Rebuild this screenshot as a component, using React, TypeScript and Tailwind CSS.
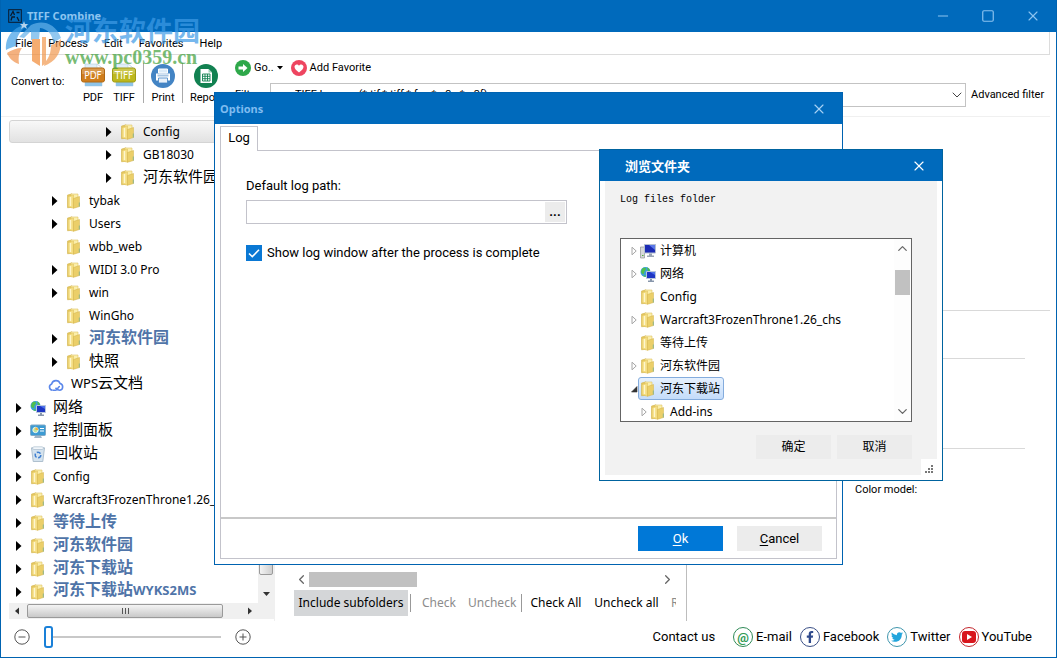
import type { ReactNode } from 'react';
import { useState } from 'react';
import { FaFacebookF, FaTwitter } from 'react-icons/fa';
import { ChevronDown, ChevronLeft, ChevronRight, ChevronUp, Minus, Square, X } from 'lucide-react';

type IconName = 'folder' | 'cloud' | 'network' | 'panel' | 'bin' | 'computer';

interface TreeItem {
    label: string;
    level: number;
    icon: IconName;
    leaf?: boolean;
    marked?: boolean;
    selected?: boolean;
    open?: boolean;
}

const TREE: TreeItem[] = [
    { label: 'Config', level: 5, icon: 'folder', selected: true },
    { label: 'GB18030', level: 5, icon: 'folder' },
    { label: '河东软件园', level: 5, icon: 'folder' },
    { label: 'tybak', level: 2, icon: 'folder' },
    { label: 'Users', level: 2, icon: 'folder' },
    { label: 'wbb_web', level: 2, icon: 'folder', leaf: true },
    { label: 'WIDI 3.0 Pro', level: 2, icon: 'folder' },
    { label: 'win', level: 2, icon: 'folder' },
    { label: 'WinGho', level: 2, icon: 'folder', leaf: true },
    { label: '河东软件园', level: 2, icon: 'folder', marked: true },
    { label: '快照', level: 2, icon: 'folder' },
    { label: 'WPS云文档', level: 1, icon: 'cloud', leaf: true },
    { label: '网络', level: 0, icon: 'network' },
    { label: '控制面板', level: 0, icon: 'panel' },
    { label: '回收站', level: 0, icon: 'bin' },
    { label: 'Config', level: 0, icon: 'folder' },
    { label: 'Warcraft3FrozenThrone1.26_chs', level: 0, icon: 'folder' },
    { label: '等待上传', level: 0, icon: 'folder', marked: true },
    { label: '河东软件园', level: 0, icon: 'folder', marked: true },
    { label: '河东下载站', level: 0, icon: 'folder', marked: true },
    { label: '河东下载站WYKS2MS', level: 0, icon: 'folder', marked: true },
];

const BROWSE_TREE: TreeItem[] = [
    { label: '计算机', level: 0, icon: 'computer' },
    { label: '网络', level: 0, icon: 'network' },
    { label: 'Config', level: 0, icon: 'folder', leaf: true },
    { label: 'Warcraft3FrozenThrone1.26_chs', level: 0, icon: 'folder' },
    { label: '等待上传', level: 0, icon: 'folder', leaf: true },
    { label: '河东软件园', level: 0, icon: 'folder' },
    { label: '河东下载站', level: 0, icon: 'folder', selected: true, open: true },
    { label: 'Add-ins', level: 1, icon: 'folder' },
];

const INDENT: Record<number, string> = {
    0: 'pl-1',
    1: 'pl-[22px]',
    2: 'pl-10',
    5: 'pl-[94px]',
};

const TREE_ICONS: Record<IconName, ReactNode> = {
    folder: (
        <svg viewBox="0 0 16 16" className="size-4">
            <path d="M1.500 2 6 .8v13.500l-4.500.5z" fill="#e6c95f" stroke="#cfae45" strokeWidth=".5" />
            <path d="M5 1h7v12L8 14.500H5z" fill="#fbeeaa" stroke="#dfc564" strokeWidth=".6" />
            <path d="M2 3.500 7.500 2v13.300L2 13.800z" fill="#f4dd82" stroke="#dcbd57" strokeWidth=".5" />
            <path d="M7.500 5.500 13.500 3.500v10L7.500 15.300z" fill="#ebcf69" stroke="#d3b24a" strokeWidth=".5" />
            <path d="M4.500 4v9" stroke="#fdf6cf" strokeWidth="1.400" />
            <path d="M13.300 9.500v4" stroke="#8cb48a" strokeWidth="1" />
        </svg>
    ),
    cloud: (
        <svg viewBox="0 0 16 16" className="size-4" fill="none" stroke="#5b87ea" strokeWidth="1.600">
            <path d="M4.500 13.300a3.300 3.300 0 0 1-.8-6.400 4.400 4.400 0 0 1 8.400-.4 3.500 3.500 0 0 1-.2 6.800c-2.500 0-3.400-1.300-4.400-2.500" />
            <path d="M4.500 13.300h3c2.500 0 2-3.800 4.500-3.800" />
        </svg>
    ),
    network: (
        <svg viewBox="0 0 16 16" className="size-4">
            <circle cx="5.500" cy="6" r="5" fill="#3b9fd8" />
            <path d="M2 3c2-2 4-1 4 0S4 5 4 7 2 8 1 6zM7 1.500c2 .5 3 2 3 3.500L8 5z" fill="#4fbf4c" />
            <path d="M3 10c1-1 2-1 3 0l-1 1z" fill="#4fbf4c" />
            <path d="M6.500 5.500h9v7h-9z" fill="#1d36c4" stroke="#b8c6dc" strokeWidth="1" />
            <path d="M10 6h5v3z" fill="#4e71ea" />
            <path d="M10 13h2v1.500h2V16H8v-1.500h2z" fill="#8796ab" />
        </svg>
    ),
    panel: (
        <svg viewBox="0 0 16 16" className="size-4">
            <rect x=".5" y="2" width="15" height="10.500" rx="1" fill="#3c9bd3" stroke="#7fa9c6" />
            <circle cx="5.500" cy="7" r="2.700" fill="#bfe3a0" stroke="#fff" strokeWidth=".8" />
            <path d="M5.500 7V4.300A2.700 2.700 0 0 1 8.200 7z" fill="#f0b040" />
            <path d="M10 5.500h4M10 8h4" stroke="#fff" />
            <path d="M5 13h6l1 2H4z" fill="#9fb4c6" />
        </svg>
    ),
    bin: (
        <svg viewBox="0 0 16 16" className="size-4">
            <path d="M1.500 2h13l-1.700 13.500H3.200z" fill="#d5e3ee" stroke="#9fb4c4" strokeWidth=".8" />
            <path d="M1.500 2 4 .8h8L14.500 2 12 3.500H4z" fill="#f1f6fa" stroke="#9fb4c4" strokeWidth=".6" />
            <circle cx="8" cy="9" r="2.800" fill="none" stroke="#3f7fd1" strokeWidth="1.500" strokeDasharray="4.200 1.600" />
        </svg>
    ),
    computer: (
        <svg viewBox="0 0 16 16" className="size-4">
            <path d="M.5 4h4v11h-4z" fill="#d7d9da" stroke="#8f9494" strokeWidth=".7" />
            <path d="M2 12.500h1.500" stroke="#4fae3b" />
            <path d="M4.500 1.500h11v8.500h-11z" fill="#1b2bb4" stroke="#b4bfd0" />
            <path d="M9 2h6v5z" fill="#5a78e8" />
            <path d="M9 10.500h3v2h2V14H7v-1.500h2z" fill="#9aa5b4" />
        </svg>
    ),
};

function Arrow({ item, hollow }: { item: TreeItem; hollow?: boolean }) {
    return (
        <svg viewBox="0 0 8 10" className="h-[10px] w-2 shrink-0">
            {item.open && <path d="M7 2.500V8H1.500z" fill="#333" stroke="#333" strokeWidth=".6" />}
            {!item.leaf && !item.open && hollow && (
                <path d="M2 1.200 6.200 5 2 8.800z" fill="#fff" stroke="#a6a6a6" />
            )}
            {!item.leaf && !item.open && !hollow && <path d="M2 0 7.500 5 2 10z" fill="#000" />}
        </svg>
    );
}

function TreeRow({ item }: { item: TreeItem }) {
    const hasCjk = /[\u4e00-\u9fff]/.test(item.label);
    return (
        <li
            className={`flex h-[23px] items-center border whitespace-nowrap ${INDENT[item.level]} ${
                item.selected
                    ? 'rounded-[3px] border-[#d4d4d4] bg-linear-to-b from-[#f8f8f8] to-[#e2e2e2]'
                    : 'border-transparent'
            }`}
        >
            <Arrow item={item} />
            <span className="ml-2 shrink-0">{TREE_ICONS[item.icon]}</span>
            <span
                className={`ml-[7px] ${item.marked ? 'font-bold text-[#4f74a8]' : ''} ${
                    hasCjk ? (item.marked ? 'pb-1 text-[16px]' : 'pb-1 text-[15px]') : ''
                }`}
            >
                {item.label.split(/([A-Z0-9]+)/).map((part, i) => (
                    <span key={i} className={/^[A-Z0-9]/.test(part) && hasCjk ? 'text-[13px]' : ''}>
                        {part}
                    </span>
                ))}
            </span>
        </li>
    );
}

function BrowseRow({ item }: { item: TreeItem }) {
    return (
        <li className={`flex h-[23px] items-center whitespace-nowrap ${item.level ? 'pl-[19px]' : 'pl-[9px]'}`}>
            <Arrow item={item} hollow />
            <span
                className={`flex h-[23px] items-center gap-1 rounded-[3px] border pr-[3px] pl-px ${
                    item.selected
                        ? 'border-[#84acdd] bg-linear-to-b from-[#e6f1fe] to-[#c4dcfa]'
                        : 'border-transparent'
                }`}
            >
                {TREE_ICONS[item.icon]}
                {item.label}
            </span>
        </li>
    );
}

function FileTypeIcon({ text, tone }: { text: string; tone: 'orange' | 'lime' }) {
    return (
        <span className="relative flex h-[26px] w-6 items-center">
            <svg viewBox="0 0 24 26" className="absolute inset-0">
                <path d="M4 1h12l5 4v18H4z" fill="#dfeefa" stroke="#b9cddd" strokeWidth=".6" />
                <path d="M16 1v4h5z" fill="#fff" stroke="#b9cddd" strokeWidth=".6" />
                <path d="M4 18h17v5H4z" fill="#8fc4e8" />
                <rect
                    x=".5"
                    y="5"
                    width="23"
                    height="14"
                    rx="2"
                    fill={tone === 'orange' ? '#cf7d1c' : '#bdb81d'}
                    stroke={tone === 'orange' ? '#b06812' : '#a19c14'}
                />
                <path d="M1 7a1.500 1.500 0 0 1 1.500-1.500h19A1.500 1.500 0 0 1 23 7v4H1z" fill="#fff" opacity=".22" />
            </svg>
            <span className="relative w-full text-center font-['DejaVu_Sans_Condensed'] text-[10px] leading-none text-white">
                {text}
            </span>
        </span>
    );
}

function ToolButton({ icon, label }: { icon: ReactNode; label: string }) {
    return (
        <button type="button" className="flex flex-col items-center gap-px">
            <span className="flex h-[26px] items-center">{icon}</span>
            {label}
        </button>
    );
}

function PrintIcon() {
    return (
        <svg viewBox="0 0 24 24" className="size-6">
            <circle cx="12" cy="12" r="12" fill="#4384c4" />
            <path d="M7.500 5h9v4h-9z" fill="#dcebf8" stroke="#fff" />
            <path d="M5 9.500h14v7H5z" fill="#fff" />
            <path d="M6.500 10.500h11v2h-11z" fill="#a7c5e2" />
            <path d="M7.500 14h9v5h-9z" fill="#e8f1fa" stroke="#4384c4" strokeWidth=".8" />
        </svg>
    );
}

function ReportIcon() {
    return (
        <svg viewBox="0 0 24 24" className="size-6">
            <circle cx="12" cy="12" r="12" fill="#128151" />
            <path d="M6.500 5h8l3.500 3.500V19H6.500z" fill="#fff" />
            <path d="M14.500 5v3.500H18z" fill="#9fd0b8" />
            <path
                d="M8.500 10h7.500v7H8.500zM8.500 12.300h7.500M8.500 14.700h7.500M11 10v7M13.500 10v7"
                fill="none"
                stroke="#128151"
                strokeWidth=".9"
            />
        </svg>
    );
}

function CaptionButtons() {
    return (
        <div className="flex items-center gap-[30px] pr-[15px] text-[#8cc4f0]">
            <button type="button" aria-label="Minimize">
                <Minus className="size-4" strokeWidth={1.500} />
            </button>
            <button type="button" aria-label="Maximize">
                <Square className="size-[14px]" strokeWidth={2} />
            </button>
            <button type="button" aria-label="Close">
                <X className="size-4" strokeWidth={1.700} />
            </button>
        </div>
    );
}

function Watermark() {
    return (
        <div className="pointer-events-none absolute top-[14px] left-[4px] flex opacity-70">
            <svg viewBox="0 0 60 54" className="h-[54px] w-[60px]">
                <path d="M1 36C0 22 9 12 24 10c-9 6-13 13-13 22-3 1-7 2-10 4z" fill="#3f9fe6" />
                <path d="M26 11C36 6 50 8 56 24l-8 5c0-8-5-14-13-15l-1 12h-8V17l-7 7-5-1z" fill="#64b2ea" />
                <path d="M2 39c4-3 10-5 15-5-3 4-4 9-3 16C8 48 4 44 2 39z" fill="#f0914a" />
                <path d="M27 25h8v27l-8-5z" fill="#f28a35" />
                <path d="M37 23h4v26l-4 3zM46 31c4-1 7-3 10-6 1 14-6 23-17 27l1-4c4-4 6-10 6-17z" fill="#f29a50" />
                <path d="m19 7 1 3h3l-2 2 1 3-3-2-3 2 1-3-2-2h3z" fill="#fff" />
            </svg>
            <div className="flex flex-col">
                <span className="font-['Noto_Sans_CJK_SC',sans-serif] text-[27px] leading-[32px] font-bold text-[#3e9be6]">
                    河东软件园
                </span>
                <span className="font-['Liberation_Serif',serif] text-[20px] leading-[22px] font-bold text-[#3fa03a]">
                    www.pc0359.cn
                </span>
            </div>
        </div>
    );
}

function SidePanel() {
    return (
        <aside className="flex w-[274px] shrink-0 flex-col border-r border-[#f0f0f0] pl-2">
            <div className="flex pt-[3px]">
                <ul className="min-w-0 flex-1 overflow-hidden">
                    {TREE.map((item, i) => (
                        <TreeRow key={i} item={item} />
                    ))}
                </ul>
                <div className="flex w-4 shrink-0 flex-col items-center justify-end bg-[#f0f0f0]">
                    <div className="h-[120px] w-[14px] rounded-[2px] border border-[#9a9a9a] bg-linear-to-r from-[#f4f4f4] to-[#cfcfcf]" />
                    <svg viewBox="0 0 15 28" className="h-7 w-[15px]">
                        <path d="M4 17h7l-3.500 4z" fill="#333" />
                    </svg>
                </div>
            </div>
            <div className="flex h-4 items-center bg-[#f0f0f0]">
                <svg viewBox="0 0 18 16" className="h-4 w-[18px]">
                    <path d="M10 4.500v7L6 8z" fill="#333" />
                </svg>
                <div className="flex h-[14px] w-[196px] items-center justify-center gap-[2px] rounded-[2px] border border-[#9a9a9a] bg-linear-to-b from-[#f4f4f4] to-[#c9c9c9]">
                    <i className="h-[6px] w-px bg-[#555]" />
                    <i className="h-[6px] w-px bg-[#555]" />
                    <i className="h-[6px] w-px bg-[#555]" />
                </div>
                <svg viewBox="0 0 18 16" className="ml-[18px] h-4 w-[18px]">
                    <path d="M7 4.500v7L11 8z" fill="#333" />
                </svg>
            </div>
        </aside>
    );
}

function ListPanel() {
    return (
        <section className="flex w-[408px] shrink-0 flex-col justify-end border-r border-[#bdbdbd] pr-[10px] pl-[15px]">
            <div className="flex h-[15px] items-center text-[#666]">
                <ChevronLeft className="size-[15px]" strokeWidth={2} />
                <div className="h-full w-[108px] bg-[#c1c1c1]" />
                <ChevronRight className="mr-px ml-auto size-[15px]" strokeWidth={2} />
            </div>
            <div className="mt-[3px] mb-[5px] flex h-[26px] items-center overflow-hidden text-[12px] whitespace-nowrap">
                <button type="button" className="h-full w-[114px] shrink-0 bg-[#d4d6d8]">
                    Include subfolders
                </button>
                <div className="ml-[2px] h-[18px] w-px shrink-0 bg-[#999]" />
                <button type="button" className="ml-[11px] w-[34px] shrink-0 text-[#8c8c8c]">Check</button>
                <button type="button" className="ml-3 w-[48px] shrink-0 text-[#8c8c8c]">Uncheck</button>
                <div className="ml-[5px] h-[18px] w-px shrink-0 bg-[#999]" />
                <button type="button" className="ml-2 w-[52px] shrink-0">Check All</button>
                <button type="button" className="ml-3 w-[65px] shrink-0">Uncheck all</button>
                <button type="button" className="ml-3 text-[#8c8c8c]">Refresh</button>
            </div>
        </section>
    );
}

function SettingsPanel() {
    return (
        <section className="flex flex-1 flex-col pt-[193px] pr-[6px]">
            <hr className="border-[#d9d9d9]" />
            <hr className="mt-[47px] mr-[25px] border-[#d9d9d9]" />
            <hr className="mt-[89px] mr-[25px] border-[#d9d9d9]" />
            <p className="mt-[33px] ml-[168px] font-[Roboto] text-[11px] leading-4">Color model:</p>
        </section>
    );
}

function ContactLink({ label, ring, children }: { label: string; ring: string; children: ReactNode }) {
    return (
        <a href="#contact" className="flex items-center gap-[3px]">
            <span className={`flex size-5 items-center justify-center rounded-full border ${ring}`}>{children}</span>
            {label}
        </a>
    );
}

function Footer() {
    const [zoom, setZoom] = useState(0);

    return (
        <footer className="flex h-9 items-center justify-between pr-6 pb-1 pl-[13px] font-[Roboto] text-[13px]">
            <div className="flex items-center">
                <svg viewBox="0 0 16 16" className="size-4" fill="none" stroke="#555">
                    <circle cx="8" cy="8" r="7.200" />
                    <path d="M4.500 8h7" />
                </svg>
                <input
                    type="range"
                    aria-label="Zoom"
                    min={0}
                    max={100}
                    value={zoom}
                    onChange={(e) => setZoom(Number(e.target.value))}
                    className="mr-[14px] ml-[14px] h-[22px] w-[177px] appearance-none bg-[linear-gradient(#c8c8c8,#c8c8c8)] bg-[length:100%_2px] bg-center bg-no-repeat [&::-webkit-slider-thumb]:h-[22px] [&::-webkit-slider-thumb]:w-[9px] [&::-webkit-slider-thumb]:appearance-none [&::-webkit-slider-thumb]:rounded-[3px] [&::-webkit-slider-thumb]:border-2 [&::-webkit-slider-thumb]:border-[#1a80d8] [&::-webkit-slider-thumb]:bg-white"
                />
                <svg viewBox="0 0 16 16" className="size-4" fill="none" stroke="#555">
                    <circle cx="8" cy="8" r="7.200" />
                    <path d="M4.500 8h7M8 4.500v7" />
                </svg>
            </div>
            <div className="flex items-center gap-2">
                <span className="mr-[10px]">Contact us</span>
                <ContactLink label="E-mail" ring="border-[#2f8a57]">
                    <span className="text-[13px] leading-none font-bold text-[#2f9a55]">@</span>
                </ContactLink>
                <ContactLink label="Facebook" ring="border-[#3a4f86]">
                    <FaFacebookF className="size-3 text-[#2f4a8c]" />
                </ContactLink>
                <ContactLink label="Twitter" ring="border-[#3f96ad]">
                    <FaTwitter className="size-3 text-[#22a5dc]" />
                </ContactLink>
                <ContactLink label="YouTube" ring="border-[#c3262c]">
                    <svg viewBox="0 0 14 12" className="h-3 w-[14px]">
                        <rect width="14" height="12" rx="3" fill="#d8161d" />
                        <path d="M5 3v6l5-3z" fill="#fff" />
                    </svg>
                </ContactLink>
            </div>
        </footer>
    );
}

function OptionsDialog() {
    const [showLog, setShowLog] = useState(true);

    return (
        <div
            role="dialog"
            aria-label="Options"
            className="absolute top-[92px] left-[213px] flex h-[473px] w-[629px] flex-col border border-[#0063b1] bg-white font-[Roboto] text-[13px]"
        >
            <div className="flex h-[31px] items-center justify-between bg-[#006abc] pr-[15px] pl-[5px]">
                <h2 className="font-['Noto_Sans'] text-[11px] font-bold text-[#7fbcf0]">Options</h2>
                <button type="button" aria-label="Close" className="text-[#a8d2f4]">
                    <X className="size-4" strokeWidth={1.700} />
                </button>
            </div>
            <div className="flex pt-[2px] pr-[5px] pl-[5px]">
                <div role="tab" className="flex h-[25px] w-[38px] items-center justify-center border border-b-0 border-[#c3c3cb] pb-[2px]">
                    Log
                </div>
                <div className="flex-1 border-b border-[#c3c3cb]" />
            </div>
            <div className="mx-[5px] mb-[5px] flex flex-1 flex-col border border-t-0 border-[#c3c3cb]">
                <div className="flex flex-1 flex-col pt-[25px] pl-[25px]">
                    <label htmlFor="logPath" className="leading-5">Default log path:</label>
                    <div className="mt-1 flex h-6 w-[321px] border border-[#c3c3cb] p-px">
                        <input id="logPath" type="text" className="min-w-0 flex-1 px-1 outline-none" />
                        <button type="button" className="w-5 bg-[#ececec] font-bold">...</button>
                    </div>
                    <label className="mt-[19px] flex items-center gap-[5px] leading-5">
                        <span className="relative flex size-4">
                            <input
                                type="checkbox"
                                checked={showLog}
                                onChange={(e) => setShowLog(e.target.checked)}
                                className="size-4 appearance-none border border-[#0a78d4] checked:bg-[#0a78d4]"
                            />
                            <svg viewBox="0 0 16 16" className="pointer-events-none absolute inset-0 size-4">
                                <path d="M3 8.500 6.300 11.700 13 4.800" fill="none" stroke="#fff" strokeWidth="1.600" />
                            </svg>
                        </span>
                        Show log window after the process is complete
                    </label>
                </div>
                <div className="flex h-[41px] items-center justify-end gap-[14px] border-t-2 border-[#c8c8c8] pr-[14px]">
                    <button type="button" className="h-[25px] w-[85px] bg-[#0078d7] text-white">
                        <u className="underline-offset-2">O</u>k
                    </button>
                    <button type="button" className="h-[25px] w-[85px] bg-[#ececec]">
                        <u className="underline-offset-2">C</u>ancel
                    </button>
                </div>
            </div>
        </div>
    );
}

function BrowseDialog() {
    return (
        <div
            role="dialog"
            aria-label="浏览文件夹"
            className="absolute top-[149px] left-[598px] flex h-[332px] w-[344px] flex-col border border-[#00639f] bg-white text-[12px]"
        >
            <div className="flex h-[31px] shrink-0 items-center justify-between bg-[#006abc] pr-[15px] pl-[25px] text-white">
                <h2 className="text-[13px] font-bold">浏览文件夹</h2>
                <button type="button" aria-label="Close">
                    <X className="size-4" strokeWidth={1.700} />
                </button>
            </div>
            <div className="relative mx-[5px] mb-[5px] flex flex-1 flex-col bg-[#f2f2f2] pr-[25px] pl-[15px]">
                <p className="mt-[11px] font-['Liberation_Mono',monospace] text-[10px] leading-4">Log files folder</p>
                <div className="mt-[30px] flex h-[184px] overflow-hidden border border-[#646464] bg-white">
                    <ul className="flex-1">
                        {BROWSE_TREE.map((item, i) => (
                            <BrowseRow key={i} item={item} />
                        ))}
                    </ul>
                    <div className="flex w-[17px] flex-col items-center justify-between bg-[#fdfdfd] py-[2px] text-[#666]">
                        <ChevronUp className="size-[15px]" strokeWidth={2} />
                        <div className="mb-[96px] h-[25px] w-[15px] bg-[#c1c1c1]" />
                        <ChevronDown className="size-[15px]" strokeWidth={2} />
                    </div>
                </div>
                <div className="mt-[13px] flex justify-end gap-[6px]">
                    <button type="button" className="h-6 w-[75px] bg-[#ececec]">确定</button>
                    <button type="button" className="h-6 w-[75px] bg-[#ececec]">取消</button>
                </div>
                <svg viewBox="0 0 16 16" className="absolute right-0 bottom-0 size-4 bg-white">
                    <path
                        d="M10 6h2v2h-2zM7 9h2v2H7zM10 9h2v2h-2zM4 12h2v2H4zM7 12h2v2H7zM10 12h2v2h-2z"
                        fill="#777"
                    />
                </svg>
            </div>
        </div>
    );
}

/**
 * Main window of the converter with the Options and Browse dialogs open
 */
export default function App() {
    return (
        <div className="relative flex min-h-screen flex-col overflow-hidden border border-t-0 border-[#0063b1] bg-white font-['Noto_Sans','Noto_Sans_CJK_SC',sans-serif] text-[12px] leading-4 text-black">
            {/* Title bar */}
            <header className="flex h-8 items-center justify-between bg-[#006abc]">
                <h1 className="flex items-center gap-[5px] pl-[7px] text-[11px] font-bold text-[#8cc4f0]">
                    <svg viewBox="0 0 14 14" className="size-[14px]" fill="none" stroke="#0b1a2c">
                        <rect x=".7" y=".7" width="12.600" height="12.600" />
                        <path d="M2.500 7 5 2.500 6.500 6M8.500 3.500h3M3 11.500l1-3.500h3M9 8l2 4" strokeWidth="1.300" />
                    </svg>
                    TIFF Combine
                </h1>
                <CaptionButtons />
            </header>

            {/* Menu */}
            <nav className="mr-[6px] ml-[6px] flex h-[23px] items-center gap-4 border-r border-b border-[#dcdcdc] pt-[2px] pl-2 font-[Roboto] text-[11px]">
                <button type="button">File</button>
                <button type="button">Process</button>
                <button type="button">Edit</button>
                <button type="button">Favorites</button>
                <button type="button">Help</button>
            </nav>

            {/* Toolbar */}
            <div className="mr-[6px] flex h-[62px] border-b border-[#f0f0f0] pl-[10px] font-[Roboto] text-[11px]">
                <span className="mt-[19px] w-[70px] shrink-0">Convert to:</span>
                <div className="flex w-[142px] shrink-0 items-start gap-[7px] pt-2">
                    <ToolButton icon={<FileTypeIcon text="PDF" tone="orange" />} label="PDF" />
                    <ToolButton icon={<FileTypeIcon text="TIFF" tone="lime" />} label="TIFF" />
                    <div className="h-10 w-px bg-[#aaa]" />
                    <ToolButton icon={<PrintIcon />} label="Print" />
                    <div className="h-10 w-px bg-[#aaa]" />
                    <ToolButton icon={<ReportIcon />} label="Report" />
                </div>
                <div className="ml-3 flex flex-1 flex-col pt-[5px]">
                    <div className="flex h-4 items-center gap-2">
                        <button type="button" className="flex items-center gap-[3px]">
                            <svg viewBox="0 0 16 16" className="size-4">
                                <circle cx="8" cy="8" r="8" fill="#2ea84a" />
                                <path d="M3.500 6.500H8V4l4.500 4L8 12V9.500H3.500z" fill="#fff" />
                            </svg>
                            Go..
                            <svg viewBox="0 0 6 4" className="h-1 w-[6px]">
                                <path d="M0 0h6L3 3.500z" />
                            </svg>
                        </button>
                        <button type="button" className="flex items-center gap-[3px]">
                            <svg viewBox="0 0 16 16" className="size-4">
                                <circle cx="8" cy="8" r="8" fill="#ee4560" />
                                <path d="M8 12.500C5.500 10.500 3.500 9 3.500 6.800c0-2.600 3.300-3.300 4.500-1 1.200-2.300 4.500-1.600 4.500 1 0 2.200-2 3.700-4.500 5.700z" fill="#fff" />
                            </svg>
                            Add Favorite
                        </button>
                    </div>
                    <div className="mt-[7px] flex items-center">
                        <label htmlFor="filter" className="w-[35px]">Filter:</label>
                        <div className="relative flex flex-1">
                            <select
                                id="filter"
                                className="h-6 w-full appearance-none border border-[#c3c3c3] bg-white pl-6"
                            >
                                <option>TIFF Images (*.tif;*.tiff;*.fax;*.g3n;*.g3f)</option>
                            </select>
                            <ChevronDown className="pointer-events-none absolute top-1 right-[1px] size-4 text-[#444]" strokeWidth={1.500} />
                        </div>
                        <a href="#advanced" className="ml-[5px] w-[79px]">Advanced filter</a>
                    </div>
                </div>
            </div>

            <main className="flex flex-1">
                <SidePanel />
                <div className="w-1" />
                <ListPanel />
                <SettingsPanel />
            </main>

            <Footer />

            <OptionsDialog />
            <BrowseDialog />
            <Watermark />
        </div>
    );
}
